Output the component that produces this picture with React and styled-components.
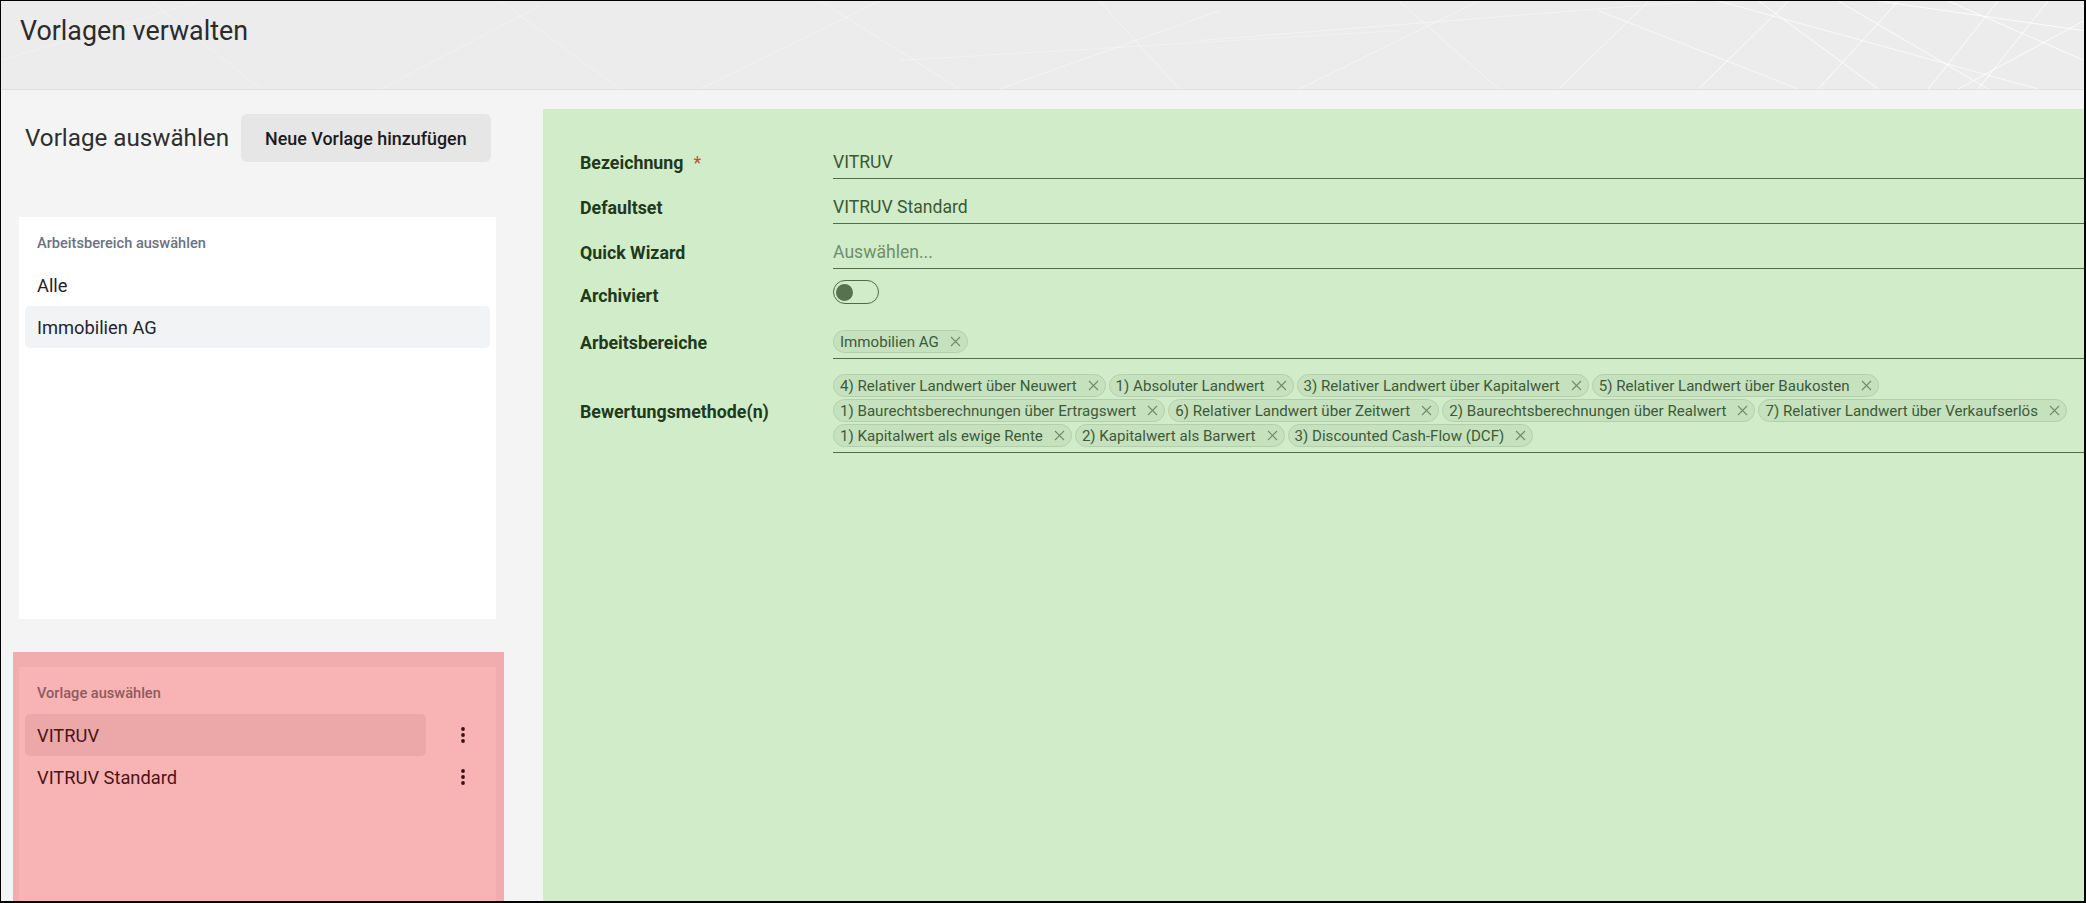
import React from 'react'
import styled, { createGlobalStyle } from 'styled-components'

const GlobalStyle = createGlobalStyle`
  html, body {
    margin: 0;
    padding: 0;
  }
  body {
    font-family: Roboto, "Noto Sans", "Liberation Sans", sans-serif;
    background: #f4f4f4;
  }
  * {
    box-sizing: border-box;
  }
`

const Frame = styled.div`
  width: 2086px;
  height: 903px;
  overflow: hidden;
  border: 1px solid #000;
  border-right-width: 2px;
  border-bottom-width: 2px;
  display: flex;
  flex-direction: column;
  background: #f4f4f4;
`

const Header = styled.header`
  position: relative;
  flex: 0 0 89px;
  background: #ececec;
  border-bottom: 1px solid #e1e1e1;
  padding: 14px 19px;
  overflow: hidden;
`

const Pattern = styled.svg`
  position: absolute;
  inset: 0;
  width: 100%;
  height: 100%;
`

const Title = styled.h1`
  position: relative;
  margin: 0;
  font-size: 26.8px;
  line-height: 32px;
  font-weight: 400;
  color: #2b2b2b;
`

const Body = styled.div`
  flex: 1;
  min-height: 0;
  display: flex;
`

const LeftColumn = styled.aside`
  flex: 0 0 542px;
  display: flex;
  flex-direction: column;
  padding-top: 24px;
`

const HeadingRow = styled.div`
  display: flex;
  align-items: center;
  gap: 12px;
  padding-left: 24px;
  height: 48px;
`

const Heading = styled.h2`
  margin: 0;
  font-size: 24.2px;
  font-weight: 400;
  color: #2e2e2e;
`

const AddButton = styled.button`
  height: 48px;
  padding: 0 24px;
  border: none;
  border-radius: 6px;
  background: #e6e6e6;
  font-family: inherit;
  font-size: 17.9px;
  font-weight: 500;
  color: #1c1c1c;
`

const CardSlot = styled.div`
  margin: 55px 0 0 18px;
`

const Card = styled.div`
  width: 477px;
  background: ${p => (p.$danger ? '#f8b4b4' : '#fff')};
  padding: 16px 6px;
  ${p => (p.$grow ? 'flex: 1;' : 'height: 402px;')}
`

const CardLabel = styled.div`
  padding: 0 12px;
  font-size: 14.6px;
  line-height: 20px;
  font-weight: 500;
  color: ${p => (p.$danger ? '#8f5a5e' : '#6b7280')};
  margin-bottom: 11px;
`

const ListRow = styled.div`
  display: flex;
  align-items: center;
`

const ListItem = styled.div`
  flex: 1;
  height: 42px;
  display: flex;
  align-items: center;
  padding: 0 12px;
  border-radius: 5px;
  font-size: 18.3px;
  color: ${p => (p.$danger ? '#4a1418' : '#1f2430')};
  background: ${p => (p.$active ? (p.$danger ? '#eca8a9' : '#f2f3f5') : 'transparent')};
`

const KebabButton = styled.button`
  flex: 0 0 40px;
  height: 40px;
  margin: 0 7px 0 17px;
  border: none;
  background: transparent;
  display: flex;
  align-items: center;
  justify-content: center;
  padding: 0;
`

const DangerZone = styled.div`
  flex: 1;
  margin: 33px 0 0 12px;
  width: 491px;
  background: #f1adad;
  padding: 15px 8px 0 6px;
  display: flex;
  flex-direction: column;
`

const EditPanel = styled.main`
  flex: 1;
  margin-top: 19px;
  background: #d1ecc9;
  padding: 36px 0 0 37px;
`

const Form = styled.div`
  display: grid;
  grid-template-columns: 253px 1fr;
  row-gap: 11px;
  align-items: center;
`

const Label = styled.div`
  font-size: 17.8px;
  font-weight: 700;
  color: #1f3a1b;
  display: flex;
  align-items: center;
  margin-top: ${p => (p.$raise ? '-4px' : '0')};
`

const Required = styled.span`
  color: #b4552f;
  font-weight: 400;
  margin-left: 10px;
`

const Field = styled.div`
  min-height: 34px;
  display: flex;
  align-items: ${p => (p.$plain ? 'flex-start' : 'center')};
  font-size: 17.6px;
  color: ${p => (p.$placeholder ? '#6f8f69' : '#3b5836')};
  border-bottom: ${p => (p.$plain ? 'none' : '1px solid #4f6e4a')};
  padding: ${p => (p.$chips ? '4px 0 5px' : '0')};
  align-self: stretch;
`

const ChipWrap = styled.div`
  display: flex;
  flex-wrap: wrap;
  gap: 2px 3px;
  margin-right: -40px;
`

const Chip = styled.span`
  display: inline-flex;
  align-items: center;
  gap: 11px;
  height: 23px;
  padding: 0 6px 0 6px;
  border: 1px solid #b3d0ab;
  border-radius: 12px;
  background: #c6e1be;
  font-size: 15.1px;
  color: #3d5a38;
  white-space: nowrap;
`

const Toggle = styled.span`
  display: inline-flex;
  align-items: center;
  width: 46px;
  height: 24px;
  border: 1.5px solid #4d6b48;
  border-radius: 12px;
  padding-left: 2px;
`

const Knob = styled.span`
  width: 17px;
  height: 17px;
  border-radius: 50%;
  background: #55734f;
`

const CloseIcon = () => (
  <svg width="11" height="11" viewBox="0 0 11 11">
    <path d="M1 1L10 10M10 1L1 10" stroke="#6f8c69" strokeWidth="1.1" />
  </svg>
)

const Kebab = () => (
  <svg width="6" height="18" viewBox="0 0 6 18">
    <circle cx="3" cy="3" r="1.9" fill="#3a1216" />
    <circle cx="3" cy="9" r="1.9" fill="#3a1216" />
    <circle cx="3" cy="15" r="1.9" fill="#3a1216" />
  </svg>
)

// faint decorative strokes of the header background
const lines = [
  [1760, 0, 1880, 89, 0.8], [1790, 0, 1700, 89, 0.8], [1840, 0, 1990, 89, 0.8], [1900, 0, 1820, 89, 0.8],
  [1950, 0, 2086, 60, 0.8], [2000, 0, 1930, 89, 0.8], [2050, 0, 1980, 89, 0.8], [1880, 0, 2086, 30, 0.8],
  [1600, 10, 1800, 89, 0.6], [1650, 0, 1560, 89, 0.6], [2086, 20, 1960, 89, 0.8], [1720, 0, 2040, 89, 0.7],
  [1400, 0, 1500, 89, 0.45], [1300, 89, 1480, 0, 0.45], [1100, 0, 1180, 89, 0.4], [1000, 89, 1220, 10, 0.4],
  [820, 0, 960, 89, 0.35], [700, 89, 880, 0, 0.35], [500, 0, 620, 89, 0.3], [380, 89, 540, 5, 0.3],
  [150, 0, 260, 89, 0.3], [0, 60, 200, 0, 0.3], [1200, 40, 1700, 0, 0.4], [900, 60, 1400, 30, 0.3],
]

const methods = [
  '4) Relativer Landwert über Neuwert',
  '1) Absoluter Landwert',
  '3) Relativer Landwert über Kapitalwert',
  '5) Relativer Landwert über Baukosten',
  '1) Baurechtsberechnungen über Ertragswert',
  '6) Relativer Landwert über Zeitwert',
  '2) Baurechtsberechnungen über Realwert',
  '7) Relativer Landwert über Verkaufserlös',
  '1) Kapitalwert als ewige Rente',
  '2) Kapitalwert als Barwert',
  '3) Discounted Cash-Flow (DCF)',
]

const App = () => {
  return (
    <Frame>
      <GlobalStyle />
      <Header>
        <Pattern viewBox="0 0 2086 89" preserveAspectRatio="none">
          {lines.map(([x1, y1, x2, y2, o], i) => (
            <line key={i} x1={x1} y1={y1} x2={x2} y2={y2} stroke="#fff" strokeOpacity={o} strokeWidth="1" />
          ))}
        </Pattern>
        <Title>Vorlagen verwalten</Title>
      </Header>
      <Body>
        <LeftColumn>
          <HeadingRow>
            <Heading>Vorlage auswählen</Heading>
            <AddButton>Neue Vorlage hinzufügen</AddButton>
          </HeadingRow>
          <CardSlot>
            <Card>
              <CardLabel>Arbeitsbereich auswählen</CardLabel>
              <ListRow><ListItem>Alle</ListItem></ListRow>
              <ListRow><ListItem $active>Immobilien AG</ListItem></ListRow>
            </Card>
          </CardSlot>
          <DangerZone>
            <Card $danger $grow>
              <CardLabel $danger>Vorlage auswählen</CardLabel>
              <ListRow>
                <ListItem $danger $active>VITRUV</ListItem>
                <KebabButton><Kebab /></KebabButton>
              </ListRow>
              <ListRow>
                <ListItem $danger>VITRUV Standard</ListItem>
                <KebabButton><Kebab /></KebabButton>
              </ListRow>
            </Card>
          </DangerZone>
        </LeftColumn>
        <EditPanel>
          <Form>
            <Label>Bezeichnung<Required>*</Required></Label>
            <Field>VITRUV</Field>
            <Label>Defaultset</Label>
            <Field>VITRUV Standard</Field>
            <Label>Quick Wizard</Label>
            <Field $placeholder>Auswählen...</Field>
            <Label $raise>Archiviert</Label>
            <Field $plain><Toggle><Knob /></Toggle></Field>
            <Label>Arbeitsbereiche</Label>
            <Field>
              <Chip>Immobilien AG<CloseIcon /></Chip>
            </Field>
            <Label>Bewertungsmethode(n)</Label>
            <Field $chips>
              <ChipWrap>
                {methods.map(m => (
                  <Chip key={m}>{m}<CloseIcon /></Chip>
                ))}
              </ChipWrap>
            </Field>
          </Form>
        </EditPanel>
      </Body>
    </Frame>
  )
}

export default App
